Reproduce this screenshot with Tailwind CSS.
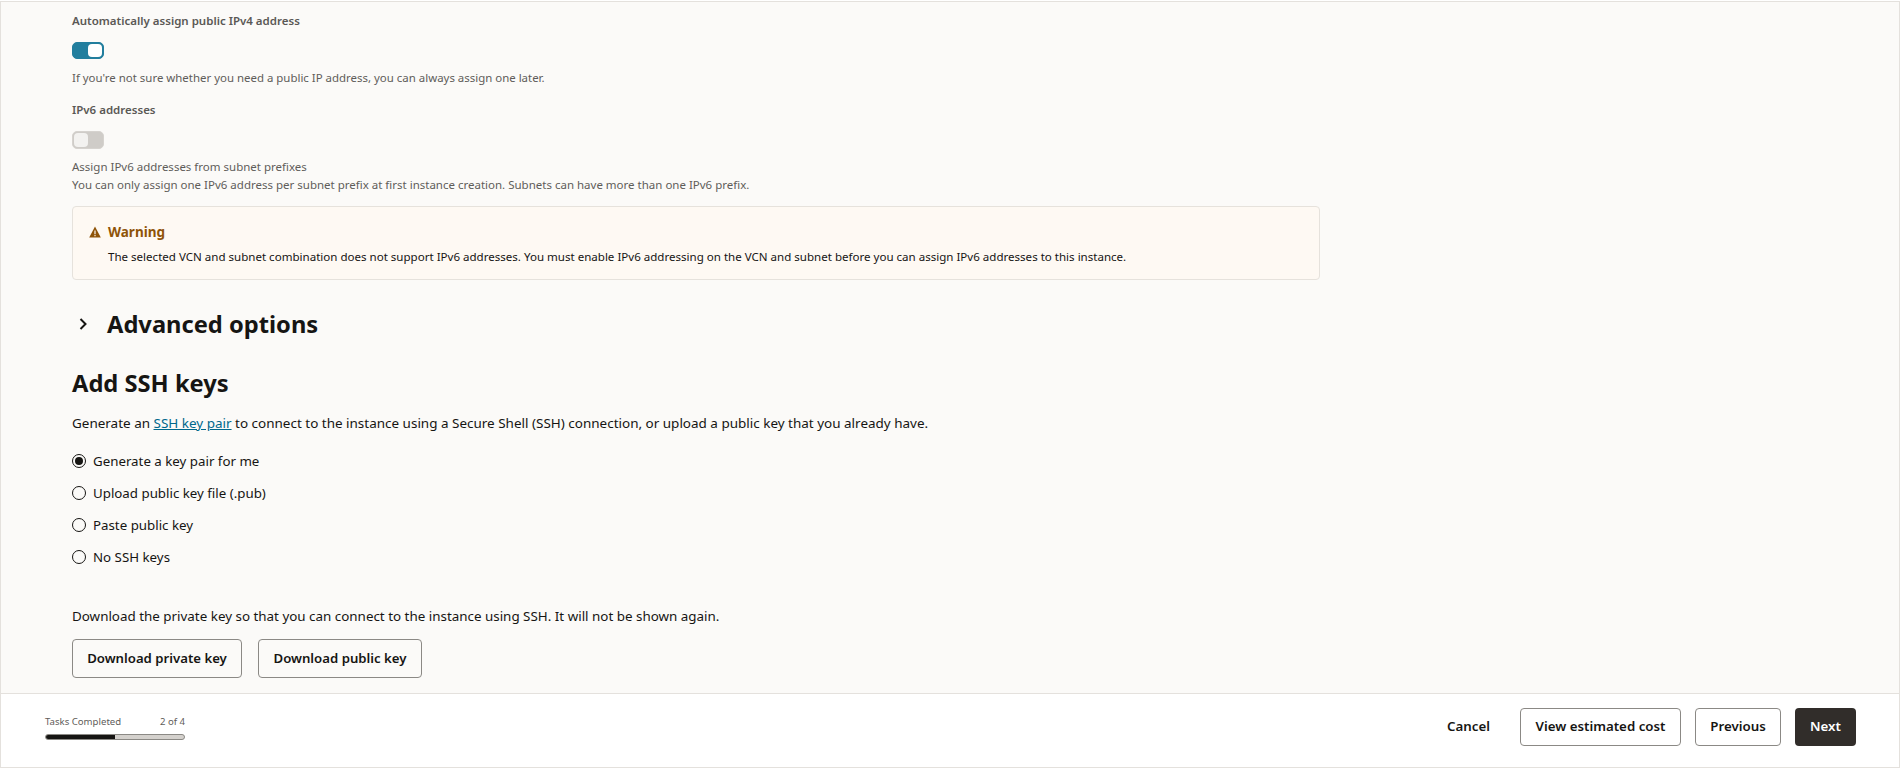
<!DOCTYPE html>
<html lang="en">
<head>
  <meta charset="UTF-8" />
  <title>Create compute instance</title>
  <script src="https://cdn.jsdelivr.net/npm/@tailwindcss/browser@4"></script>
</head>
<body class="h-[770px] w-[1900px] overflow-hidden bg-white font-['Noto_Sans',sans-serif] text-[#161513]">
  <div class="mt-[1px] flex h-[767px] flex-col border border-[#e4e1dd]">
    <main class="h-[691px] overflow-hidden bg-[#fbfaf8] pl-[71px]">
      <p class="mt-[11px] text-[11.5px] leading-[16px] font-semibold text-[#5a5855]">Automatically assign public IPv4 address</p>
      <div class="mt-[13px] flex h-[17px] w-[32px] items-center justify-end rounded-[5px] border border-[#227e9e] bg-[#227e9e] pr-[1px]">
        <span class="h-[13px] w-[14px] rounded-[4px] bg-white"></span>
      </div>
      <p class="mt-[10px] text-[11.45px] leading-[18px] text-[#5f5d5a]">If you're not sure whether you need a public IP address, you can always assign one later.</p>
      <p class="mt-[15px] text-[11.5px] leading-[16px] font-semibold text-[#5a5855]">IPv6 addresses</p>
      <div class="mt-[13px] flex h-[18px] w-[32px] items-center rounded-[5px] border border-[#d6d3cf] bg-[#cfccc8] pl-[1px]">
        <span class="h-[14px] w-[14px] rounded-[4px] bg-[#f3f2f0]"></span>
      </div>
      <p class="mt-[9px] text-[11.5px] leading-[18px] text-[#5f5d5a]">Assign IPv6 addresses from subnet prefixes</p>
      <p class="text-[11.5px] leading-[18px] text-[#5f5d5a]">You can only assign one IPv6 address per subnet prefix at first instance creation. Subnets can have more than one IPv6 prefix.</p>

      <div class="mt-[12px] h-[74px] w-[1248px] rounded-[4px] border border-[#e6e2dc] bg-[#fef9f3] pt-[15px] pl-[16px]">
        <div class="flex items-center gap-[7px]">
          <svg class="h-[12px] w-[12px]" viewBox="0 0 12 12"><path fill="#8f5408" fill-rule="evenodd" d="M6 .6 11.8 11.4H.2ZM5.4 4.4v3.8h1.2V4.4Zm0 4.6v1.2h1.2V9Z"/></svg>
          <p class="text-[13.5px] leading-[20px] font-bold text-[#8f5408]">Warning</p>
        </div>
        <p class="mt-[6px] pl-[19px] text-[11.55px] leading-[18px]">The selected VCN and subnet combination does not support IPv6 addresses. You must enable IPv6 addressing on the VCN and subnet before you can assign IPv6 addresses to this instance.</p>
      </div>

      <div class="mt-[26px] flex items-center">
        <svg class="ml-[6px] h-[14px] w-[10px]" viewBox="0 0 10 14" fill="none" stroke="#161513" stroke-width="2"><path d="M2.5 2 7.5 7l-5 5"/></svg>
        <h2 class="ml-[19px] text-[23.7px] leading-[36px] font-bold">Advanced options</h2>
      </div>

      <h2 class="mt-[23px] text-[23.7px] leading-[36px] font-bold">Add SSH keys</h2>
      <p class="mt-[11px] text-[13.47px] leading-[22px]">Generate an <a href="#" class="text-[#00688c] underline">SSH key pair</a> to connect to the instance using a Secure Shell (SSH) connection, or upload a public key that you already have.</p>

      <div class="mt-[16px] flex flex-col gap-[10px] text-[13.3px] leading-[22px]">
        <label class="flex items-center gap-[7px]"><span class="flex h-[14px] w-[14px] items-center justify-center rounded-full border border-[#161513]"><span class="h-[8px] w-[8px] rounded-full bg-[#161513]"></span></span>Generate a key pair for me</label>
        <label class="flex items-center gap-[7px]"><span class="h-[14px] w-[14px] rounded-full border border-[#161513]"></span>Upload public key file (.pub)</label>
        <label class="flex items-center gap-[7px]"><span class="h-[14px] w-[14px] rounded-full border border-[#161513]"></span>Paste public key</label>
        <label class="flex items-center gap-[7px]"><span class="h-[14px] w-[14px] rounded-full border border-[#161513]"></span>No SSH keys</label>
      </div>

      <p class="mt-[37px] text-[13.4px] leading-[22px]">Download the private key so that you can connect to the instance using SSH. It will not be shown again.</p>
      <div class="mt-[12px] flex gap-[16px]">
        <button class="h-[39px] w-[170px] rounded-[4px] border border-[#8b8985] text-[13.2px] font-semibold">Download private key</button>
        <button class="h-[39px] w-[164px] rounded-[4px] border border-[#8b8985] text-[13.2px] font-semibold">Download public key</button>
      </div>
    </main>

    <footer class="flex flex-1 items-center justify-between border-t border-[#e4e1dd] bg-white pr-[43px] pb-[7px] pl-[44px]">
      <div class="w-[140px]">
        <div class="flex justify-between text-[9.6px] leading-[14px] text-[#5f5d5a]"><span>Tasks Completed</span><span>2 of 4</span></div>
        <div class="mt-[5px] h-[6px] overflow-hidden rounded-full border border-[#8b8985] bg-[#d4d1cd]">
          <div class="h-full w-1/2 bg-[#161513]"></div>
        </div>
      </div>
      <div class="flex items-center text-[13.3px] font-semibold">
        <button class="mr-[30px]">Cancel</button>
        <button class="mr-[14px] h-[38px] w-[161px] rounded-[4px] border border-[#8b8985]">View estimated cost</button>
        <button class="mr-[14px] h-[38px] w-[86px] rounded-[4px] border border-[#8b8985]">Previous</button>
        <button class="h-[38px] w-[61px] rounded-[4px] bg-[#312d2a] text-white">Next</button>
      </div>
    </footer>
  </div>
</body>
</html>
